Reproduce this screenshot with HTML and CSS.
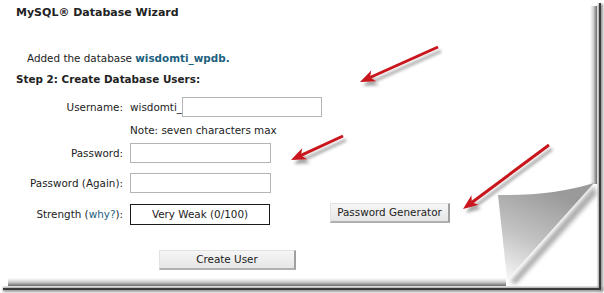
FILE: index.html
```html
<!DOCTYPE html>
<html>
<head>
<meta charset="utf-8">
<link rel="stylesheet" href="styles.css">
</head>
<body>
<div class="page">
  <h1 class="title">MySQL® Database Wizard</h1>
  <p class="added">Added the database <a class="link strong">wisdomti_wpdb.</a></p>
  <h2 class="step">Step 2: Create Database Users:</h2>
  <div class="form">
    <div class="row r-user">
      <span class="label">Username:</span>
      <span class="field"><span class="prefix">wisdomti_</span><span class="input w-user"></span></span>
    </div>
    <div class="row r-note">
      <span class="label"></span>
      <span class="field note">Note: seven characters max</span>
    </div>
    <div class="row r-pass">
      <span class="label">Password:</span>
      <span class="field"><span class="input w-pass"></span></span>
    </div>
    <div class="row r-again">
      <span class="label">Password (Again):</span>
      <span class="field"><span class="input w-pass"></span></span>
    </div>
    <div class="row r-strength">
      <span class="label">Strength (<a class="link">why?</a>):</span>
      <span class="field"><span class="meter">Very Weak (0/100)</span><span class="btn gen">Password Generator</span></span>
    </div>
    <div class="row r-create">
      <span class="label"></span>
      <span class="field"><span class="btn create">Create User</span></span>
    </div>
  </div>
</div>

<svg class="overlay" width="604" height="293" viewBox="0 0 604 293" xmlns="http://www.w3.org/2000/svg">
  <defs>
    <filter id="ash" x="-20%" y="-20%" width="140%" height="160%">
      <feDropShadow dx="3" dy="4" stdDeviation="1.8" flood-color="#000" flood-opacity="0.35"/>
    </filter>
    <filter id="blur2"><feGaussianBlur stdDeviation="2"/></filter>
    <filter id="blur1"><feGaussianBlur stdDeviation="1"/></filter>
    <linearGradient id="rs" x1="0" y1="0" x2="1" y2="0">
      <stop offset="0" stop-color="#fff"/>
      <stop offset="0.5" stop-color="#cfcfcf"/>
      <stop offset="1" stop-color="#6a6a6a"/>
    </linearGradient>
    <linearGradient id="bs" x1="0" y1="0" x2="0" y2="1">
      <stop offset="0" stop-color="#fff"/>
      <stop offset="0.5" stop-color="#cfcfcf"/>
      <stop offset="1" stop-color="#6a6a6a"/>
    </linearGradient>
    <linearGradient id="curl" gradientUnits="userSpaceOnUse" x1="545" y1="188" x2="505" y2="278">
      <stop offset="0" stop-color="#9a9a9a"/>
      <stop offset="0.55" stop-color="#c4c4c4"/>
      <stop offset="1" stop-color="#f6f6f6"/>
    </linearGradient>
  </defs>

  <!-- page drop shadow -->
  <rect x="590" y="6" width="7" height="178" fill="url(#rs)"/>
  <rect x="8" y="278" width="498" height="8" fill="url(#bs)"/>

  <!-- outer frame -->
  <rect x="598" y="4" width="5" height="287" fill="#9a9a9a" filter="url(#blur1)"/>
  <rect x="3" y="287" width="600" height="5" fill="#9a9a9a" filter="url(#blur1)"/>
  <rect x="599" y="3" width="2" height="287" fill="#3a3a3a"/>
  <rect x="3" y="288" width="598" height="2" fill="#3a3a3a"/>

  <!-- page curl -->
  <path d="M594,186 L510,282 L516,284 L597,194 Z" fill="#888" filter="url(#blur2)" opacity="0.7"/>
  <path d="M498,195 Q552,196 594,183 L507,280 Q503,240 498,195 Z" fill="url(#curl)"/>

  <!-- arrows -->
  <g fill="#c8141b" stroke="#c8141b" filter="url(#ash)">
    <line x1="438" y1="47" x2="370.04" y2="77.5" stroke-width="3"/>
    <polygon stroke="none" points="360,82 376.15,81.33 370.04,77.5 371.23,70.39"/>
    <line x1="343" y1="136" x2="300.99" y2="155.39" stroke-width="3"/>
    <polygon stroke="none" points="291,160 307.13,159.16 300.99,155.39 302.11,148.26"/>
    <line x1="549" y1="145" x2="471.82" y2="202.43" stroke-width="3"/>
    <polygon stroke="none" points="463,209 478.61,204.85 471.82,202.43 471.45,195.23"/>
  </g>
</svg>
</body>
</html>
```

FILE: styles.css
```css
html, body {
  margin: 0;
  padding: 0;
  background: #fff;
}
body {
  width: 604px;
  height: 293px;
  overflow: hidden;
  position: relative;
  font-family: "DejaVu Sans", Verdana, sans-serif;
  font-size: 10.4px;
  color: #222;
}
.page {
  padding: 3px 0 0 16px;
}
.title {
  margin: 0;
  font-size: 11px;
  font-weight: bold;
  line-height: 20px;
  height: 20px;
}
.added {
  margin: 25px 0 0 11px;
  line-height: 20px;
  height: 20px;
}
.link {
  color: #1d5f7e;
  text-decoration: none;
}
.strong {
  font-weight: bold;
}
.step {
  margin: 1px 0 0 0;
  font-size: 10.4px;
  font-weight: bold;
  line-height: 20px;
  height: 20px;
}
.form {
  display: flex;
  flex-direction: column;
  margin-left: -16px;
}
.row {
  display: flex;
  align-items: center;
  height: 20px;
}
.label {
  width: 123px;
  text-align: right;
  flex: none;
}
.field {
  display: flex;
  align-items: center;
  margin-left: 7px;
}
.r-user { margin-top: 8px; }
.r-note { margin-top: 3px; }
.r-pass { margin-top: 3px; }
.r-again { margin-top: 10px; }
.r-strength { margin-top: 11px; }
.r-create { margin-top: 26px; }
.input {
  display: block;
  box-sizing: border-box;
  height: 20px;
  border: 1px solid #b4b4b4;
  background: #fff;
}
.w-user { width: 140px; }
.w-pass { width: 141px; }
.meter {
  box-sizing: border-box;
  width: 140px;
  height: 21px;
  border: 1px solid #1a1a1a;
  text-align: center;
  line-height: 19px;
}
.btn {
  box-sizing: border-box;
  display: block;
  text-align: center;
  background: linear-gradient(#f6f6f6, #e6e6e6);
  border-top: 1px solid #e2e2e2;
  border-left: 1px solid #e2e2e2;
  border-right: 2px solid #a0a0a0;
  border-bottom: 2px solid #b0b0b0;
  color: #222;
}
.gen {
  margin-left: 60px;
  width: 120px;
  height: 20px;
  line-height: 17px;
  margin-top: -2px;
}
.create {
  margin-left: 29px;
  width: 137px;
  height: 20px;
  line-height: 17px;
}
.overlay {
  position: absolute;
  left: 0;
  top: 0;
  pointer-events: none;
}
```
